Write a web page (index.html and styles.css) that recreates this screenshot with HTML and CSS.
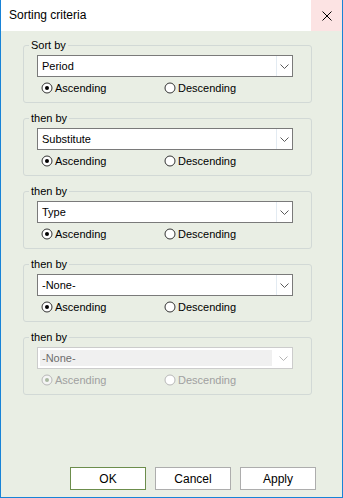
FILE: index.html
```html
<!DOCTYPE html>
<html>
<head>
<meta charset="utf-8">
<link rel="stylesheet" href="styles.css">
</head>
<body>
<div class="window">
  <div class="titlebar">
    <div class="title">Sorting criteria</div>
    <div class="close">
      <svg width="10" height="10" viewBox="0 0 10 10"><path d="M0.5 0.5 L9.5 9.5 M9.5 0.5 L0.5 9.5" stroke="#000" stroke-width="1" fill="none"/></svg>
    </div>
  </div>
  <div class="body">
    <fieldset class="group">
      <legend>Sort by</legend>
      <div class="combo"><span class="value">Period</span><span class="arrow"><svg width="9" height="5" viewBox="0 0 9 5"><path d="M0.5 0.5 L4.5 4.5 L8.5 0.5" stroke="#5a5a5a" fill="none"/></svg></span></div>
      <div class="radios">
        <label class="radio"><svg class="rb" width="12" height="12" viewBox="0 0 12 12"><circle cx="6" cy="6" r="5" fill="#fff" stroke="#333"/><circle cx="6" cy="6" r="2" fill="#000"/></svg>Ascending</label>
        <label class="radio desc"><svg class="rb" width="12" height="12" viewBox="0 0 12 12"><circle cx="6" cy="6" r="5" fill="#fff" stroke="#333"/></svg>Descending</label>
      </div>
    </fieldset>
    <fieldset class="group">
      <legend>then by</legend>
      <div class="combo"><span class="value">Substitute</span><span class="arrow"><svg width="9" height="5" viewBox="0 0 9 5"><path d="M0.5 0.5 L4.5 4.5 L8.5 0.5" stroke="#5a5a5a" fill="none"/></svg></span></div>
      <div class="radios">
        <label class="radio"><svg class="rb" width="12" height="12" viewBox="0 0 12 12"><circle cx="6" cy="6" r="5" fill="#fff" stroke="#333"/><circle cx="6" cy="6" r="2" fill="#000"/></svg>Ascending</label>
        <label class="radio desc"><svg class="rb" width="12" height="12" viewBox="0 0 12 12"><circle cx="6" cy="6" r="5" fill="#fff" stroke="#333"/></svg>Descending</label>
      </div>
    </fieldset>
    <fieldset class="group">
      <legend>then by</legend>
      <div class="combo"><span class="value">Type</span><span class="arrow"><svg width="9" height="5" viewBox="0 0 9 5"><path d="M0.5 0.5 L4.5 4.5 L8.5 0.5" stroke="#5a5a5a" fill="none"/></svg></span></div>
      <div class="radios">
        <label class="radio"><svg class="rb" width="12" height="12" viewBox="0 0 12 12"><circle cx="6" cy="6" r="5" fill="#fff" stroke="#333"/><circle cx="6" cy="6" r="2" fill="#000"/></svg>Ascending</label>
        <label class="radio desc"><svg class="rb" width="12" height="12" viewBox="0 0 12 12"><circle cx="6" cy="6" r="5" fill="#fff" stroke="#333"/></svg>Descending</label>
      </div>
    </fieldset>
    <fieldset class="group">
      <legend>then by</legend>
      <div class="combo"><span class="value">-None-</span><span class="arrow"><svg width="9" height="5" viewBox="0 0 9 5"><path d="M0.5 0.5 L4.5 4.5 L8.5 0.5" stroke="#5a5a5a" fill="none"/></svg></span></div>
      <div class="radios">
        <label class="radio"><svg class="rb" width="12" height="12" viewBox="0 0 12 12"><circle cx="6" cy="6" r="5" fill="#fff" stroke="#333"/><circle cx="6" cy="6" r="2" fill="#000"/></svg>Ascending</label>
        <label class="radio desc"><svg class="rb" width="12" height="12" viewBox="0 0 12 12"><circle cx="6" cy="6" r="5" fill="#fff" stroke="#333"/></svg>Descending</label>
      </div>
    </fieldset>
    <fieldset class="group disabled">
      <legend>then by</legend>
      <div class="combo"><span class="value"><span class="fill">-None-</span></span><span class="arrow"><svg width="9" height="5" viewBox="0 0 9 5"><path d="M0.5 0.5 L4.5 4.5 L8.5 0.5" stroke="#b5b5b5" fill="none"/></svg></span></div>
      <div class="radios">
        <label class="radio"><svg class="rb" width="12" height="12" viewBox="0 0 12 12"><circle cx="6" cy="6" r="5" fill="#f4f4f4" stroke="#b8b8b8"/><circle cx="6" cy="6" r="2" fill="#a8b8a0"/></svg>Ascending</label>
        <label class="radio desc"><svg class="rb" width="12" height="12" viewBox="0 0 12 12"><circle cx="6" cy="6" r="5" fill="#fff" stroke="#b8b8b8"/></svg>Descending</label>
      </div>
    </fieldset>
    <div class="buttons">
      <button class="btn default">OK</button>
      <button class="btn">Cancel</button>
      <button class="btn">Apply</button>
    </div>
  </div>
</div>
</body>
</html>
```

FILE: styles.css
```css
html, body {
  margin: 0;
  padding: 0;
}
body {
  font-family: "Liberation Sans", Arial, sans-serif;
  font-size: 11px;
  color: #000;
}
.window {
  width: 343px;
  height: 498px;
  box-sizing: border-box;
  border: 1px solid #1883d7;
  border-top: none;
  display: flex;
  flex-direction: column;
}
.titlebar {
  height: 31px;
  background: #fff;
  display: flex;
  align-items: center;
  flex: none;
}
.title {
  flex: 1;
  padding-left: 8px;
  font-size: 12px;
  padding-bottom: 1px;
}
.close {
  width: 31px;
  height: 31px;
  background: #fce3e3;
  display: flex;
  align-items: center;
  justify-content: center;
}
.close svg {
  display: block;
  margin-left: 1px;
}
.body {
  flex: 1;
  background: #e9eee4;
  display: flex;
  flex-direction: column;
  padding: 8px 0 7px 22px;
}
.group {
  width: 289px;
  box-sizing: border-box;
  margin: 0 0 9px 0;
  padding: 0 0 8px 5px;
  border: 1px solid #d2d9d6;
  border-radius: 3px;
  min-inline-size: 0;
}
.group legend {
  padding: 0 2px;
  line-height: 13px;
  font-size: 11px;
}
.combo {
  margin: 3px 0 0 8px;
  width: 256px;
  height: 22px;
  box-sizing: border-box;
  border: 1px solid #7a7a7a;
  background: #fff;
  display: flex;
}
.combo .value {
  flex: 1;
  display: flex;
  align-items: center;
  padding-left: 4px;
  border-right: 1px solid #e3ebf2;
}
.combo .arrow {
  width: 15px;
  display: flex;
  align-items: center;
  justify-content: center;
}
.combo .arrow svg {
  display: block;
}
.radios {
  display: flex;
  margin: 5px 0 0 12px;
  height: 12px;
  align-items: center;
}
.radio {
  display: flex;
  align-items: center;
  width: 123px;
}
.rb {
  display: block;
  margin-right: 2px;
  flex: none;
}
.disabled .combo {
  border-color: #cccccc;
}
.disabled .combo .value {
  padding: 2px;
  border-right: none;
}
.disabled .combo .value .fill {
  flex: 1;
  align-self: stretch;
  background: #f0f0f0;
  display: flex;
  align-items: center;
  padding-left: 2px;
  color: #6d6d6d;
}
.disabled .combo .arrow {
  width: 18px;
}
.disabled .radio {
  color: #a0a0a0;
}
.buttons {
  margin-top: auto;
  display: flex;
  justify-content: flex-end;
  gap: 9px;
  padding-right: 26px;
}
.btn {
  width: 76px;
  height: 23px;
  box-sizing: border-box;
  border: 1px solid #adadad;
  background: #ffffff;
  font-family: "Liberation Sans", Arial, sans-serif;
  font-size: 12px;
  color: #000;
  padding: 0;
  margin: 0;
}
.btn.default {
  border-color: #6c8d4c;
}
```
